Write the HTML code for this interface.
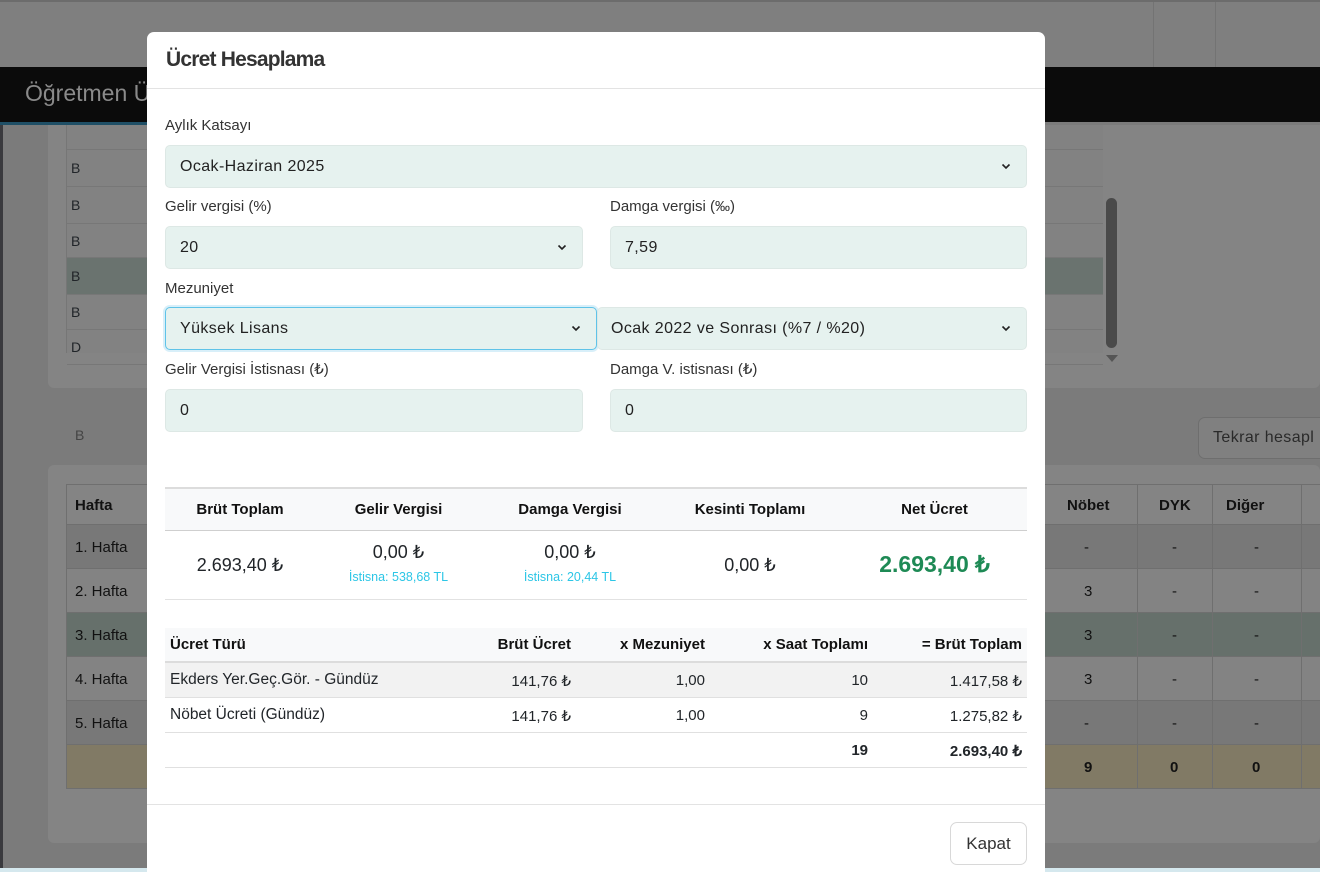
<!DOCTYPE html>
<html><head><meta charset="utf-8"><style>
*{box-sizing:border-box;margin:0;padding:0}
html,body{width:1320px;height:872px;overflow:hidden}
body{background:#7b7b7b;font-family:"Liberation Sans",sans-serif;position:relative;color:#212529}
.a{position:absolute}
.bgrow{position:absolute;left:66px;width:1254px;height:44px;border-bottom:1px solid #6f6f6f;font-size:15px;color:#111}
.bgrow span{position:absolute;top:14px}
.modal{position:absolute;left:147px;top:32px;width:898px;height:840px;background:#fff;border-radius:7px 7px 0 0;overflow:hidden}
.lbl{position:absolute;font-size:15px;color:#333}
.inp{position:absolute;height:43px;background:#e6f2ef;border:1px solid #dde8e5;border-radius:5px;font-size:16px;letter-spacing:0.4px;color:#222;padding:12px 14px;line-height:17px}
.chev{position:absolute;right:14px;top:14px;width:12px;height:12px}
.th{font-weight:bold;font-size:15px;color:#111}
.c{position:absolute;text-align:center}
.r{position:absolute;text-align:right}
</style></head><body>
<div class="a" style="left:0;top:0;width:1320px;height:67px;background:#7f7f7f;border-top:2px solid #6c6c6c"></div>
<div class="a" style="left:1215px;top:2px;width:1px;height:65px;background:#737373"></div>
<div class="a" style="left:1153px;top:2px;width:1px;height:65px;background:#737373"></div>
<div class="a" style="left:0;top:67px;width:1320px;height:55px;background:#0b0b0b"></div>
<div class="a" style="left:25px;top:80px;font-size:23px;color:#8a8a8a">Öğretmen Ü</div>
<div class="a" style="left:0;top:122px;width:147px;height:3px;background:#1f4f66"></div>
<div class="a" style="left:0;top:125px;width:3px;height:747px;background:#3a3a3e"></div>
<div class="a" style="left:48px;top:125px;width:1272px;height:263px;background:#848484;border-radius:0 0 6px 6px"></div>
<div class="a" style="left:66px;top:125px;width:1037px;height:228px;background:#828282;border-left:1px solid #767676">
 <div style="height:25px;border-bottom:1px solid #777"></div>
 <div style="height:37px;border-bottom:1px solid #777;padding:10px 4px;font-size:14px">B</div>
 <div style="height:37px;border-bottom:1px solid #777;padding:10px 4px;font-size:14px">B</div>
 <div style="height:34px;border-bottom:1px solid #777;padding:9px 4px;font-size:14px">B</div>
 <div style="height:37px;border-bottom:1px solid #777;padding:10px 4px;font-size:14px;background:#6a736f">B</div>
 <div style="height:35px;border-bottom:1px solid #777;padding:9px 4px;font-size:14px">B</div>
 <div style="height:35px;border-bottom:1px solid #777;padding:9px 4px;font-size:14px">D</div>
</div>
<div class="a" style="left:1106px;top:198px;width:11px;height:150px;background:#4a4a4a;border-radius:6px"></div>
<div class="a" style="left:1106px;top:355px;width:0;height:0;border-left:6px solid transparent;border-right:6px solid transparent;border-top:7px solid #555"></div>
<div class="a" style="left:1198px;top:417px;width:140px;height:42px;border:1px solid #6e6e6e;border-radius:7px;background:#808080;font-size:16px;color:#2a2a2a;padding:11px 14px;letter-spacing:0.4px">Tekrar hesapl</div>
<div class="a" style="left:75px;top:427px;font-size:14px;color:#444">B</div>
<div class="a" style="left:48px;top:465px;width:1272px;height:378px;background:#848484;border-radius:6px"></div>
<div class="bgrow" style="top:484px;height:41px;background:#848484;border-top:1px solid #6f6f6f"><span style="left:9px;top:12px;font-weight:bold">Hafta</span><span style="left:1001px;top:12px;font-weight:bold">Nöbet</span><span style="left:1093px;top:12px;font-weight:bold">DYK</span><span style="left:1160px;top:12px;font-weight:bold">Diğer</span></div>
<div class="bgrow" style="top:525px;background:#787878"><span style="left:9px">1. Hafta</span><span style="left:1018px">-</span><span style="left:1106px">-</span><span style="left:1188px">-</span></div>
<div class="bgrow" style="top:569px;background:#838383"><span style="left:9px">2. Hafta</span><span style="left:1018px">3</span><span style="left:1106px">-</span><span style="left:1188px">-</span></div>
<div class="bgrow" style="top:613px;background:#66706b"><span style="left:9px">3. Hafta</span><span style="left:1018px">3</span><span style="left:1106px">-</span><span style="left:1188px">-</span></div>
<div class="bgrow" style="top:657px;background:#838383"><span style="left:9px">4. Hafta</span><span style="left:1018px">3</span><span style="left:1106px">-</span><span style="left:1188px">-</span></div>
<div class="bgrow" style="top:701px;background:#787878"><span style="left:9px">5. Hafta</span><span style="left:1018px">-</span><span style="left:1106px">-</span><span style="left:1188px">-</span></div>
<div class="bgrow" style="top:745px;background:#817a65;font-weight:bold"><span style="left:1018px">9</span><span style="left:1104px">0</span><span style="left:1186px">0</span></div>
<div class="a" style="left:66px;top:484px;width:1px;height:305px;background:#6f6f6f"></div>
<div class="a" style="left:1137px;top:484px;width:1px;height:305px;background:#6f6f6f"></div>
<div class="a" style="left:1212px;top:484px;width:1px;height:305px;background:#6f6f6f"></div>
<div class="a" style="left:1301px;top:484px;width:1px;height:305px;background:#6f6f6f"></div>
<div class="a" style="left:0;top:868px;width:1320px;height:4px;background:#d5e8ee"></div>

<div class="modal">
 <div class="a" style="left:19px;top:16px;font-size:21px;font-weight:bold;color:#333;letter-spacing:-0.8px">Ücret Hesaplama</div>
 <div class="a" style="left:0;top:56px;width:898px;height:1px;background:#e3e3e3"></div>

 <div class="lbl" style="left:18px;top:85px">Aylık Katsayı</div>
 <div class="inp" style="left:18px;top:113px;width:862px">Ocak-Haziran 2025<svg class="chev" viewBox="0 0 12 12"><path d="M2.5 4.5L6 8 9.5 4.5" fill="none" stroke="#222" stroke-width="1.6"/></svg></div>

 <div class="lbl" style="left:18px;top:166px">Gelir vergisi (%)</div>
 <div class="inp" style="left:18px;top:194px;width:418px">20<svg class="chev" viewBox="0 0 12 12"><path d="M2.5 4.5L6 8 9.5 4.5" fill="none" stroke="#222" stroke-width="1.6"/></svg></div>
 <div class="lbl" style="left:463px;top:166px">Damga vergisi (‰)</div>
 <div class="inp" style="left:463px;top:194px;width:417px">7,59</div>

 <div class="lbl" style="left:18px;top:248px">Mezuniyet</div>
 <div class="inp" style="left:18px;top:275px;width:432px;border-color:#5fc3e8;box-shadow:0 0 0 2px rgba(100,190,230,.25)">Yüksek Lisans<svg class="chev" viewBox="0 0 12 12"><path d="M2.5 4.5L6 8 9.5 4.5" fill="none" stroke="#222" stroke-width="1.6"/></svg></div>
 <div class="inp" style="left:450px;top:275px;width:430px;padding-left:13px">Ocak 2022 ve Sonrası (%7 / %20)<svg class="chev" viewBox="0 0 12 12"><path d="M2.5 4.5L6 8 9.5 4.5" fill="none" stroke="#222" stroke-width="1.6"/></svg></div>

 <div class="lbl" style="left:18px;top:328px">Gelir Vergisi İstisnası (₺)</div>
 <div class="inp" style="left:18px;top:357px;width:418px">0</div>
 <div class="lbl" style="left:463px;top:328px">Damga V. istisnası (₺)</div>
 <div class="inp" style="left:463px;top:357px;width:417px">0</div>

 <div class="a" style="left:18px;top:455px;width:862px;height:44px;background:#f8f9fa;border-top:2px solid #dcdcdc;border-bottom:1px solid #cfcfcf"></div>
 <div class="c th" style="left:18px;width:150px;top:469px">Brüt Toplam</div>
 <div class="c th" style="left:168px;width:167px;top:469px">Gelir Vergisi</div>
 <div class="c th" style="left:335px;width:176px;top:469px">Damga Vergisi</div>
 <div class="c th" style="left:511px;width:184px;top:469px">Kesinti Toplamı</div>
 <div class="c th" style="left:695px;width:185px;top:469px">Net Ücret</div>
 <div class="c" style="left:18px;width:150px;top:523px;font-size:18px">2.693,40 ₺</div>
 <div class="c" style="left:168px;width:167px;top:510px;font-size:18px">0,00 ₺</div>
 <div class="c" style="left:168px;width:167px;top:538px;font-size:12.5px;color:#2cc6e6">İstisna: 538,68 TL</div>
 <div class="c" style="left:335px;width:176px;top:510px;font-size:18px">0,00 ₺</div>
 <div class="c" style="left:335px;width:176px;top:538px;font-size:12.5px;color:#2cc6e6">İstisna: 20,44 TL</div>
 <div class="c" style="left:511px;width:184px;top:523px;font-size:18px">0,00 ₺</div>
 <div class="c" style="left:695px;width:185px;top:519px;font-size:23px;font-weight:bold;color:#1e8a55">2.693,40 ₺</div>
 <div class="a" style="left:18px;top:567px;width:862px;height:1px;background:#e2e2e2"></div>

 <div class="a" style="left:18px;top:596px;width:862px;height:35px;background:#f8f9fa;border-bottom:2px solid #dcdcdc"></div>
 <div class="a th" style="left:23px;top:604px">Ücret Türü</div>
 <div class="r th" style="right:474px;top:604px">Brüt Ücret</div>
 <div class="r th" style="right:340px;top:604px">x Mezuniyet</div>
 <div class="r th" style="right:177px;top:604px">x Saat Toplamı</div>
 <div class="r th" style="right:23px;top:604px">= Brüt Toplam</div>
 <div class="a" style="left:18px;top:631px;width:862px;height:35px;background:#f2f2f2;border-bottom:1px solid #e0e0e0"></div>
 <div class="a" style="left:23px;top:639px;font-size:15.5px">Ekders Yer.Geç.Gör. - Gündüz</div>
 <div class="r" style="right:474px;top:640px;font-size:15px">141,76 ₺</div>
 <div class="r" style="right:340px;top:640px;font-size:15px">1,00</div>
 <div class="r" style="right:177px;top:640px;font-size:15px">10</div>
 <div class="r" style="right:23px;top:640px;font-size:15px">1.417,58 ₺</div>
 <div class="a" style="left:18px;top:666px;width:862px;height:35px;border-bottom:1px solid #e0e0e0"></div>
 <div class="a" style="left:23px;top:674px;font-size:15.5px">Nöbet Ücreti (Gündüz)</div>
 <div class="r" style="right:474px;top:675px;font-size:15px">141,76 ₺</div>
 <div class="r" style="right:340px;top:675px;font-size:15px">1,00</div>
 <div class="r" style="right:177px;top:675px;font-size:15px">9</div>
 <div class="r" style="right:23px;top:675px;font-size:15px">1.275,82 ₺</div>
 <div class="a" style="left:18px;top:701px;width:862px;height:35px;border-bottom:1px solid #e0e0e0"></div>
 <div class="r" style="right:177px;top:710px;font-size:15px;font-weight:bold">19</div>
 <div class="r" style="right:23px;top:710px;font-size:15px;font-weight:bold">2.693,40 ₺</div>

 <div class="a" style="left:0;top:772px;width:898px;height:1px;background:#e3e3e3"></div>
 <div class="a" style="left:803px;top:790px;width:77px;height:43px;border:1px solid #d8d8d8;border-radius:7px;font-size:17px;color:#333;text-align:center;padding-top:11px">Kapat</div>
</div>
</body></html>
